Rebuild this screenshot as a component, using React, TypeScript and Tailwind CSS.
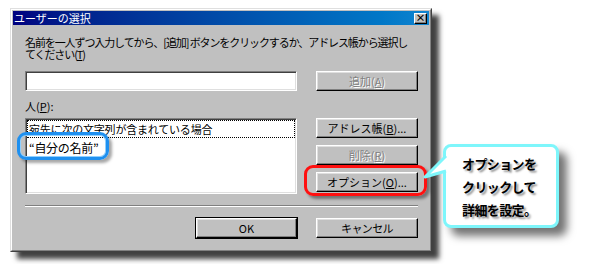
import React from "react";
import clsx from "clsx";

const raised =
  "border border-t-white border-l-white border-r-black border-b-black bg-[#c0c0c0]";

function WinButton({
  children,
  disabled,
  isDefault,
  className,
}: {
  children: React.ReactNode;
  disabled?: boolean;
  isDefault?: boolean;
  className?: string;
}) {
  return (
    <div
      className={clsx(
        "flex h-[20px] items-center justify-center whitespace-nowrap text-[11px] leading-none",
        raised,
        isDefault
          ? "shadow-[0_0_0_1px_#000,inset_-1px_-1px_0_#808080,inset_1px_1px_0_#dfdfdf]"
          : "shadow-[inset_-1px_-1px_0_#808080,inset_1px_1px_0_#dfdfdf]",
        disabled ? "text-[#808080] [text-shadow:1px_1px_0_#fff]" : "text-black",
        className ?? "w-[102px]"
      )}
    >
      {children}
    </div>
  );
}

function Acc({ k }: { k: string }) {
  return (
    <>
      (<span className="underline underline-offset-1">{k}</span>)
    </>
  );
}

function Dialog() {
  return (
    <div className="h-[244px] w-[422px] border border-t-[#dfdfdf] border-l-[#dfdfdf] border-r-[#404040] border-b-[#404040] bg-[#c0c0c0] shadow-[7px_7px_5px_rgba(0,0,0,0.75)]">
      <div className="flex h-full flex-col border border-t-white border-l-white border-r-[#808080] border-b-[#808080] p-px">
        {/* title bar */}
        <div className="flex h-[14px] items-center justify-between bg-linear-to-r from-[#000080] to-[#1084d0] pl-px pr-[2px]">
          <span className="text-[11px] leading-none text-white">ユーザーの選択</span>
          <div
            className={clsx(
              "flex h-[11px] w-[13px] items-center justify-center text-[10px] leading-none font-bold text-black",
              raised,
              "shadow-[inset_-1px_-1px_0_#808080]"
            )}
          >
            ×
          </div>
        </div>

        <div className="flex flex-col pl-[12px] pr-[11px]">
          <p className="mt-[11px] whitespace-nowrap text-[11px] leading-[12px] tracking-[-1.1px] text-black">
            名前を一人ずつ入力してから、[追加] ボタンをクリックするか、アドレス帳から選択し
            <br />
            てください<Acc k="T" />
          </p>

          <div className="mt-[11px] flex gap-[19px]">
            <div className="h-[20px] w-[272px] border border-t-[#808080] border-l-[#808080] border-r-white border-b-white bg-white shadow-[inset_1px_1px_0_#404040,inset_-1px_-1px_0_#dfdfdf]" />
            <WinButton disabled>
              追加<Acc k="A" />
            </WinButton>
          </div>

          <p className="mt-[10px] text-[11px] leading-[11px] text-black">
            人<Acc k="P" />:
          </p>

          <div className="mt-[6px] flex gap-[19px]">
            <div className="h-[76px] w-[272px] border border-t-[#808080] border-l-[#808080] border-r-white border-b-white bg-white p-px shadow-[inset_1px_1px_0_#404040,inset_-1px_-1px_0_#dfdfdf]">
              <div className="flex h-[18px] items-center border border-dotted border-black pl-px text-[11px] leading-none tracking-[-0.2px] whitespace-nowrap text-black">
                宛先に次の文字列が含まれている場合
              </div>
              <div className="flex h-[19px] items-center pl-[2px] text-[12px] leading-none tracking-[-0.3px] whitespace-nowrap text-black">
                “自分の名前”
              </div>
            </div>
            <div className="flex flex-col gap-[7px]">
              <WinButton>
                アドレス帳<Acc k="B" />...
              </WinButton>
              <WinButton disabled>
                削除<Acc k="R" />
              </WinButton>
              <WinButton>
                オプション<Acc k="O" />...
              </WinButton>
            </div>
          </div>

          <div className="mt-[11px] h-[2px] border-t border-b border-t-[#808080] border-b-white" />

          <div className="mt-[11px] flex justify-end gap-[19px]">
            <WinButton isDefault className="w-[101px]">
              OK
            </WinButton>
            <WinButton>
              <span className="tracking-[-0.6px]">キャンセル</span>
            </WinButton>
          </div>
        </div>
      </div>
    </div>
  );
}

function Callout() {
  return (
    <>
      <div className="absolute left-[443px] top-[144px] h-[84px] w-[116px] rounded-[8px] border-[3px] border-[#7ef6fb] bg-white pl-[16px] pt-[5px] shadow-[8px_8px_8px_rgba(0,0,0,0.55)]">
        <div className="text-[13px] font-bold leading-[23px] tracking-[-0.6px] text-black [text-shadow:2px_2px_2px_rgba(0,0,0,0.45)]">
          <div>オプションを</div>
          <div>クリックして</div>
          <div>詳細を設定。</div>
        </div>
      </div>
      <svg className="absolute left-[420px] top-[150px]" width="30" height="30" viewBox="0 0 30 30">
        <polygon points="26,6 5,27 26,21" fill="#fff" />
        <polyline points="26,6 5,27 26,21" fill="none" stroke="#7ef6fb" strokeWidth="3" strokeLinejoin="round" />
      </svg>
    </>
  );
}

export default function App() {
  return (
    <div className="relative h-[264px] w-[600px] overflow-hidden bg-white pl-[10px] pt-[8px] font-['Noto_Sans_CJK_JP','Liberation_Sans',sans-serif]">
      <Dialog />
      {/* blue highlight around the list item */}
      <div className="absolute left-[17px] top-[132px] h-[28px] w-[92px] rounded-[9px] border-[3px] border-[#1e90f0] shadow-[3px_3px_3px_rgba(0,0,0,0.35),inset_0_0_0_1px_#8fd0ff]" />
      {/* red highlight around the options button */}
      <div className="absolute left-[304px] top-[165px] h-[31px] w-[123px] rounded-[9px] border-[3px] border-[#ff1010] shadow-[3px_3px_3px_rgba(0,0,0,0.4)]" />
      <Callout />
    </div>
  );
}
